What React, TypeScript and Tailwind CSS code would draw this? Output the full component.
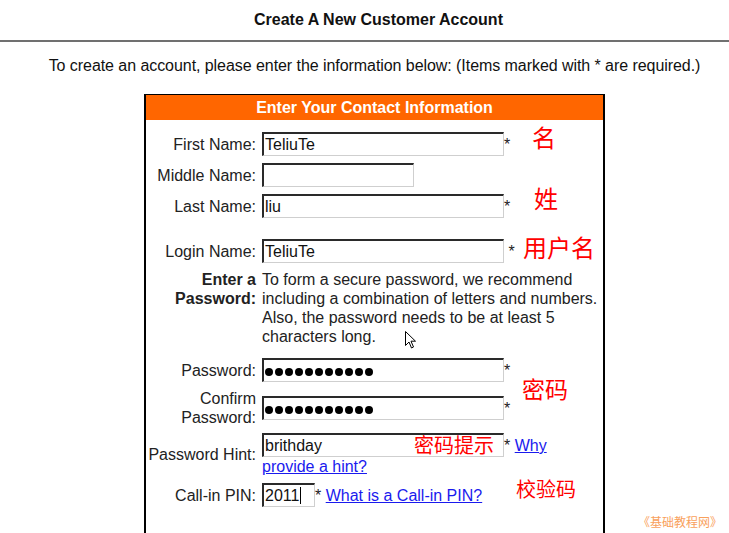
import React from "react";

function Field({ w, children }: { w: number; children?: React.ReactNode }) {
  return (
    <span
      className="inline-block align-baseline h-[24px] border-t-2 border-l-2 border-t-[#2a2a2a] border-l-[#2a2a2a] border-r border-b border-r-[#cfcfcf] border-b-[#cfcfcf] bg-white pl-[1px] leading-[21px] whitespace-nowrap text-[#111]"
      style={{ width: w }}
    >
      {children ?? "\u00a0"}
    </span>
  );
}

function Dots() {
  return (
    <>
      {Array.from({ length: 11 }).map((_, i) => (
        <span key={i} className="inline-block w-[8px] h-[8px] rounded-full bg-black mr-[2px]" />
      ))}
    </>
  );
}

function Row({
  label,
  children,
  mt,
  bold,
  top,
}: {
  label: React.ReactNode;
  children: React.ReactNode;
  mt: string;
  bold?: boolean;
  top?: boolean;
}) {
  return (
    <div className={`flex ${top ? "items-start" : "items-center"} ${mt}`}>
      <div className={`w-[116px] shrink-0 text-right pr-[6px] leading-[19px] ${bold ? "font-bold" : ""}`}>{label}</div>
      <div className="w-[340px] leading-[19px]">{children}</div>
    </div>
  );
}

export default function App() {
  const red = "absolute text-[#ff0000] leading-none font-['Noto_Sans_CJK_SC',sans-serif] whitespace-nowrap";
  return (
    <div className="relative w-[729px] h-[533px] overflow-hidden bg-white text-[16px] text-[#222] font-['Liberation_Sans',Arial,sans-serif]">
      <div className="h-[40px] flex items-center justify-center pl-[28px]">
        <h1 className="text-[16px] font-bold text-[#111]">Create A New Customer Account</h1>
      </div>
      <div className="h-[2px] bg-[#707070]" />
      <p className="mt-[14px] pl-[20px] text-center leading-[19px] text-[#111] tracking-[-0.06px]">
        To create an account, please enter the information below: (Items marked with * are required.)
      </p>
      <div className="mt-[19px] ml-[144px] w-[461px] h-[500px] border-t border-x-2 border-black">
        <div className="h-[25px] bg-[#ff6600] text-white font-bold text-center leading-[25px]">
          Enter Your Contact Information
        </div>
        <div className="pt-[12px]">
          <Row label="First Name:" mt="">
            <Field w={242}>TeliuTe</Field>*
          </Row>
          <Row label="Middle Name:" mt="mt-[7px]">
            <Field w={152} />
          </Row>
          <Row label="Last Name:" mt="mt-[7px]">
            <Field w={242}>liu</Field>*
          </Row>
          <Row label="Login Name:" mt="mt-[21px]">
            <Field w={242}>TeliuTe</Field> *
          </Row>
          <Row
            label={
              <>
                Enter a<br />Password:
              </>
            }
            mt="mt-[7px]"
            bold
            top
          >
            To form a secure password, we recommend including a combination of letters and numbers. Also, the password
            needs to be at least 5 characters long.
          </Row>
          <Row label="Password:" mt="mt-[12px]">
            <Field w={242}>
              <Dots />
            </Field>
            *
          </Row>
          <Row
            label={
              <>
                Confirm
                <br />
                Password:
              </>
            }
            mt="mt-[7px]"
          >
            <Field w={242}>
              <Dots />
            </Field>
            *
          </Row>
          <Row label="Password Hint:" mt="mt-[6px]">
            <Field w={242}>brithday</Field>*{" "}
            <a href="#" className="text-[#1a1aee] underline">
              Why provide a hint?
            </a>
          </Row>
          <Row label="Call-in PIN:" mt="mt-[7px]">
            <Field w={53}>
              2011<span className="inline-block w-[1px] h-[17px] bg-black align-[-3px] ml-[1px]" />
            </Field>
            *{" "}
            <a href="#" className="text-[#1a1aee] underline">
              What is a Call-in PIN?
            </a>
          </Row>
        </div>
      </div>

      <span className={`${red} text-[24px] left-[532px] top-[125px]`}>名</span>
      <span className={`${red} text-[24px] left-[534px] top-[186px]`}>姓</span>
      <span className={`${red} text-[24px] left-[523px] top-[235px]`}>用户名</span>
      <span className={`${red} text-[23px] left-[522px] top-[377px]`}>密码</span>
      <span className={`${red} text-[20px] left-[414px] top-[435px]`}>密码提示</span>
      <span className={`${red} text-[20px] left-[516px] top-[479px]`}>校验码</span>
      <span className="absolute left-[638px] top-[516px] text-[12px] leading-none text-[#f9a15c] font-['Noto_Sans_CJK_SC',sans-serif]">
        《基础教程网》
      </span>

      <svg className="absolute left-[404px] top-[330px]" width="14" height="20" viewBox="0 0 14 20">
        <path d="M1.5 1.5 L1.5 15.5 L5 12 L7.5 18 L9.5 17 L7 11.2 L11.5 11.2 Z" fill="white" stroke="black" strokeWidth="1" strokeLinejoin="miter" />
      </svg>
    </div>
  );
}
